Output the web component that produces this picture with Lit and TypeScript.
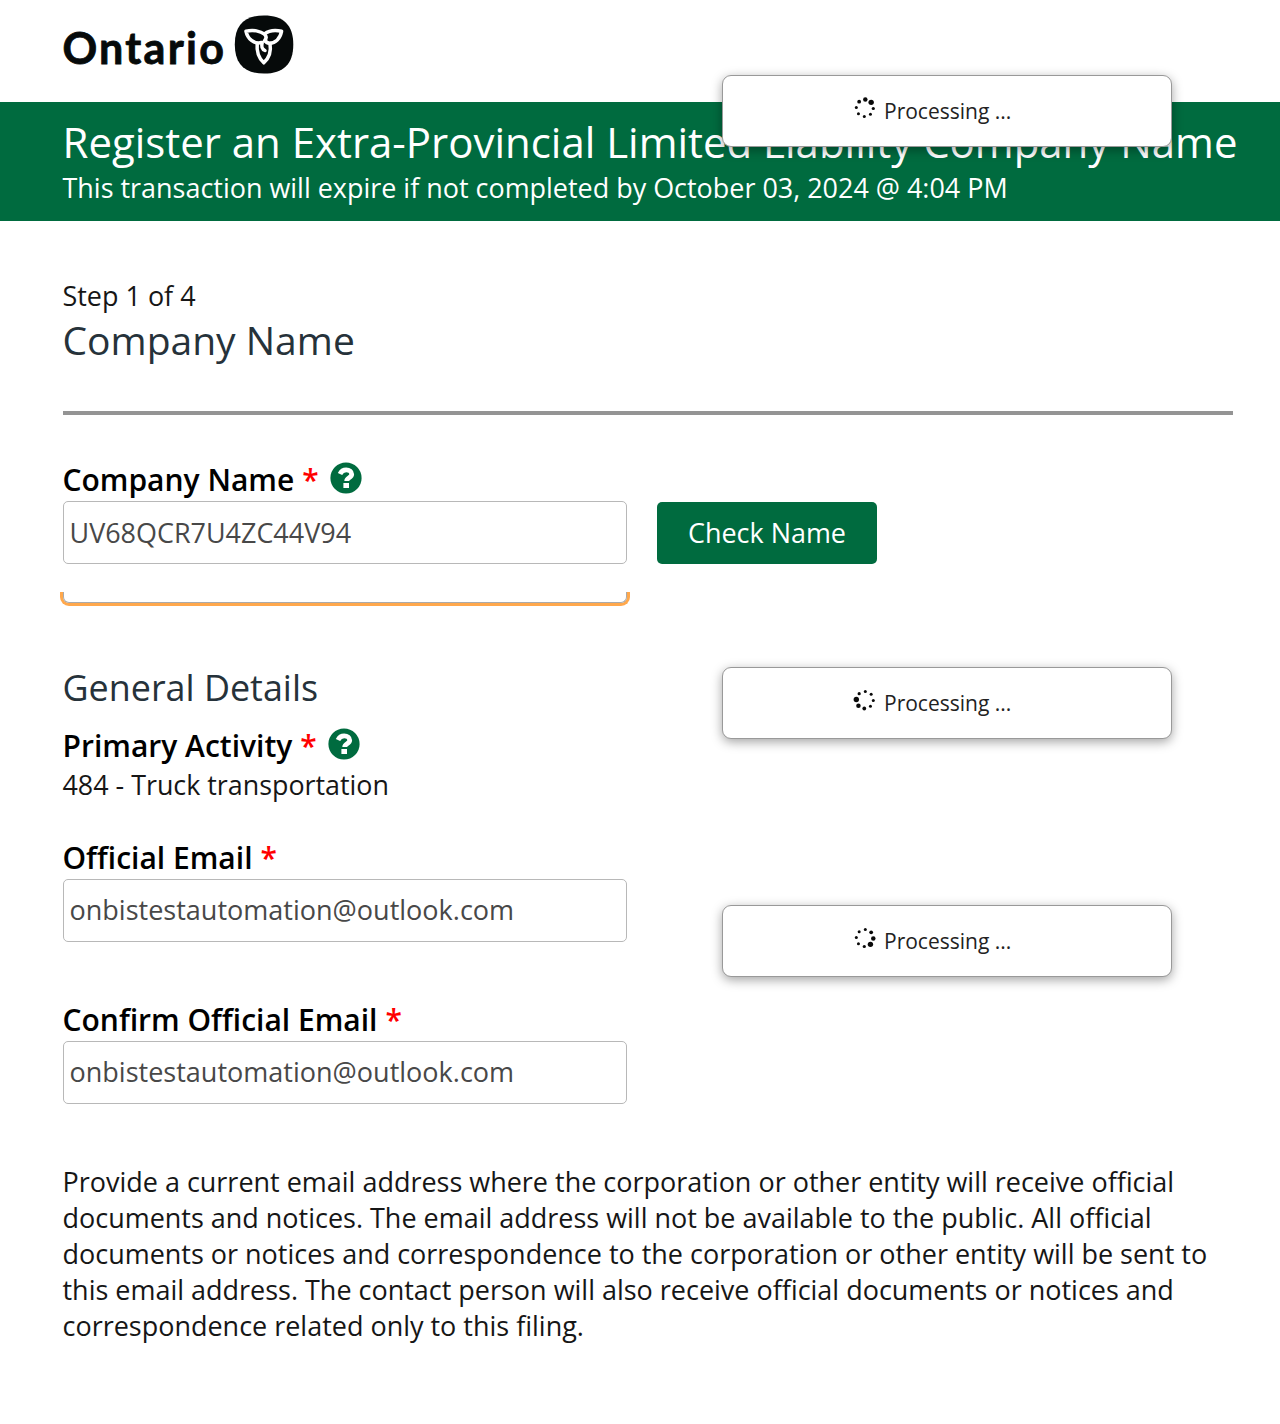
import { LitElement, html, css, svg } from "lit";
import { customElement, property } from "lit/decorators.js";

@customElement("processing-box")
class ProcessingBox extends LitElement {
  // Index of the largest dot, clockwise from the top.
  @property({ type: Number }) lead = 0;

  static styles = css`
    :host { display: block; box-sizing: border-box; width: 450px; height: 72px;
      border: 1px solid #999; border-radius: 9px; background: #fff;
      box-shadow: 0 3px 11px rgba(0, 0, 0, 0.36); }
    .row { display: flex; align-items: center; height: 70px; padding-left: 129.5px; }
    .dots { display: block; width: 24px; height: 24px; margin-top: -7px; fill: #0a0a0a; }
    .label { margin-left: 7.5px; font-size: 21px; line-height: 30px; color: #222; white-space: nowrap; }
  `;

  render() {
    const sizes = [2.7, 2.25, 1.9, 1.5, 1.5, 1.5, 1.5, 1.6];
    const dots = sizes.map((_, i) => {
      const a = (i * Math.PI) / 4 + 0.06;
      const r = sizes[(this.lead - i + 8) % 8];
      return svg`<circle cx=${11.8 + 8.5 * Math.sin(a)} cy=${12 - 8.5 * Math.cos(a)} r=${r}></circle>`;
    });
    return html`<div class="row"><svg class="dots" viewBox="0 0 24 24">${dots}</svg><span class="label">Processing ...</span></div>`;
  }
}

@customElement("app-root")
class AppRoot extends LitElement {
  static styles = css`
    :host { display: block; position: relative; width: 1280px; height: 1424px; overflow: hidden;
      background: #fff; color: #161616; font-family: "Open Sans", "Noto Sans", sans-serif; font-size: 26.95px; }
    .top { height: 102px; }
    .logo { display: block; width: 310px; height: 90px; }
    .word { font-family: Lato, sans-serif; font-weight: 700; font-size: 43px; letter-spacing: 2.3px; }
    .banner { height: 119px; box-sizing: border-box; padding: 10px 0 0 62.5px; background: #006b3f; color: #fff; white-space: nowrap; }
    .title { font-size: 41.95px; line-height: 60px; }
    .expiry { line-height: 32px; }
    .content { padding: 57px 47px 0 63px; }
    .step, .heading, .sub, .value, .note, .label { margin-left: -0.5px; }
    .step { line-height: 36px; }
    .heading { height: 54px; font-size: 39px; line-height: 52px; color: #26323a; }
    .rule { height: 4px; margin-top: 43px; background: #949494; }
    .label { display: flex; align-items: center; height: 40px; font-size: 30px; font-weight: 600; color: #000; white-space: nowrap; }
    .star { margin-left: 8px; color: #f00; }
    .help { display: block; width: 32px; height: 32px; margin: -3px 0 0 11.5px; }
    .field { box-sizing: border-box; width: 564px; height: 63px; padding: 0 5.5px; border: 1px solid #b8b8b8; border-radius: 5px; line-height: 61px; color: #484848; }
    .mail { font-size: 27.03px; line-height: 60px; }
    .namelabel { margin-top: 44px; }
    .namerow { display: flex; gap: 30px; align-items: flex-end; margin-top: 2px; }
    .button { width: 220px; height: 62px; border-radius: 5px; background: #006b3f; color: #fff; text-align: center; line-height: 62px; }
    .focus { box-sizing: border-box; width: 570px; height: 14px; margin: 28px 0 0 -3px; border: 3px solid #ffa84c; border-top: 0; border-radius: 0 0 9px 9px; }
    .focusinner { box-sizing: border-box; height: 11px; border: 1px solid #aaa; border-top: 0; border-radius: 0 0 6px 6px; }
    .sub { margin-top: 57px; font-size: 35.9px; line-height: 50px; color: #26323a; }
    .activity { margin-top: 12px; }
    .value { margin-top: 1px; line-height: 38px; font-size: 26.85px; }
    .email { margin-top: 33px; margin-bottom: 2px; }
    .confirm { margin-top: 57px; margin-bottom: 2px; }
    .note { margin-top: 60px; font-size: 26.97px; line-height: 36px; white-space: nowrap; }
    .p1, .p2, .p3 { position: absolute; left: 722px; }
    .p1 { top: 75px; }
    .p2 { top: 667px; }
    .p3 { top: 905px; }
  `;

  help() {
    return html`<svg class="help" viewBox="0 0 32 32"><circle cx="16" cy="16" r="15.6" fill="#006b3f"></circle><path d="M10 12C11.3 9.3 13.3 7.9 16.2 7.9c3.2 0 5.5 1.7 5.5 4.4 0 3.6-5 3.3-5 6.6" fill="none" stroke="#fff" stroke-width="4.8"></path><rect x="13.4" y="21" width="5.6" height="5" fill="#fff"></rect></svg>`;
  }

  render() {
    return html`
      <header class="top">
        <svg class="logo" viewBox="0 0 310 90">
          <text class="word" x="62.4" y="64" fill="#060a0a" stroke="#060a0a" stroke-width="0.8">Ontario</text>
          <path d="M264 15.4C283.5 15.4 293.3 25 293.3 44.5S283.5 73.6 264 73.6 234.8 64 234.8 44.5 244.5 15.4 264 15.4Z" fill="#060a0a"></path>
          <g fill="none" stroke="#fff" stroke-width="3.5" stroke-linejoin="round" stroke-linecap="round">
            <path d="M261.5 42.5C254 44.5 247.5 38.5 246 31.3C253 29.5 260.5 31 264.5 34.2C266.5 36 266.5 38.5 264.5 40.8"></path>
            <path d="M264.5 33.8C269 30.5 275 29.8 281.6 31.3C280 38.5 275.5 42.8 269.5 43.2C267 43 265.8 42 265.2 40.5"></path>
            <path d="M257.2 43.5C256.5 51 258.5 58 263.8 62.8C269 58 271.3 51 270 43.5M262.2 42.7C261.2 46 262 49.3 265 50.5"></path>
          </g>
        </svg>
      </header>
      <div class="banner">
        <div class="title">Register an Extra-Provincial Limited Liability Company Name</div>
        <div class="expiry">This transaction will expire if not completed by October 03, 2024 @ 4:04 PM</div>
      </div>
      <main class="content">
        <div class="step">Step 1 of 4</div>
        <div class="heading">Company Name</div>
        <div class="rule"></div>
        <div class="label namelabel">Company Name<span class="star">*</span>${this.help()}</div>
        <div class="namerow"><div class="field">UV68QCR7U4ZC44V94</div><div class="button">Check Name</div></div>
        <div class="focus"><div class="focusinner"></div></div>
        <div class="sub">General Details</div>
        <div class="label activity">Primary Activity<span class="star">*</span>${this.help()}</div>
        <div class="value">484 - Truck transportation</div>
        <div class="label email">Official Email<span class="star">*</span></div>
        <div class="field mail">onbistestautomation@outlook.com</div>
        <div class="label confirm">Confirm Official Email<span class="star">*</span></div>
        <div class="field mail">onbistestautomation@outlook.com</div>
        <div class="note">Provide a current email address where the corporation or other entity will receive official<br>documents and notices. The email address will not be available to the public. All official<br>documents or notices and correspondence to the corporation or other entity will be sent to<br>this email address. The contact person will also receive official documents or notices and<br>correspondence related only to this filing.</div>
      </main>
      <processing-box class="p1" .lead=${1}></processing-box>
      <processing-box class="p2" .lead=${6}></processing-box>
      <processing-box class="p3" .lead=${3}></processing-box>
    `;
  }
}
